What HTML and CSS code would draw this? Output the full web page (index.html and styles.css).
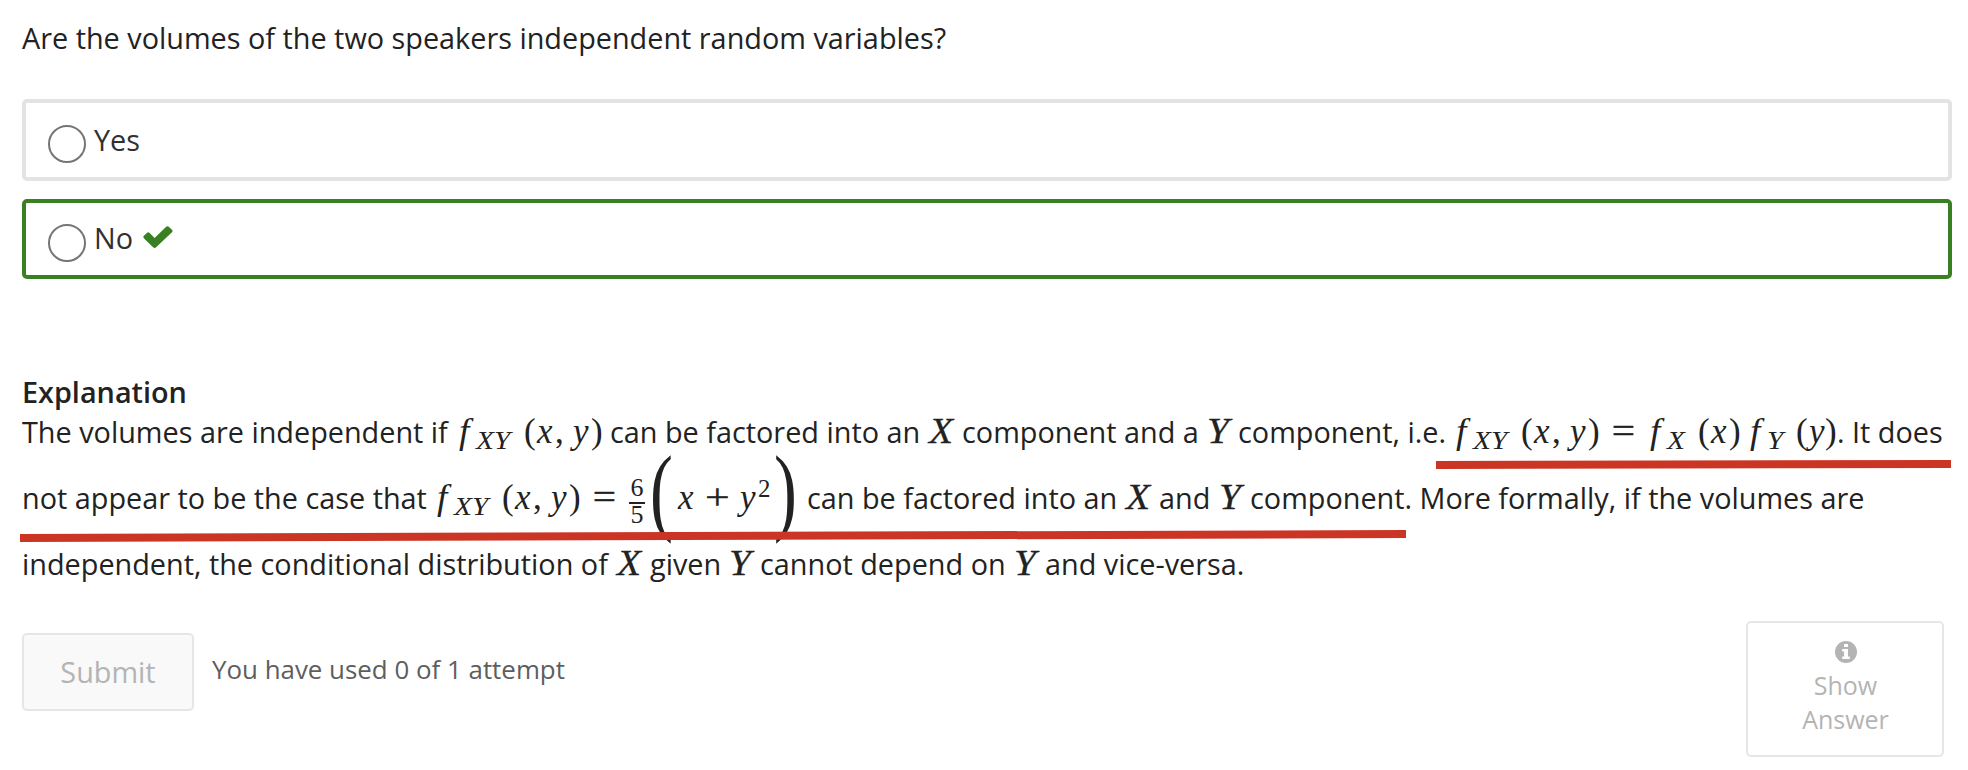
FILE: index.html
```html
<!DOCTYPE html>
<html lang="en">
<head>
<meta charset="utf-8">
<title>Problem</title>
<link rel="stylesheet" href="styles.css">
</head>
<body>
<main class="problem">
  <p class="question">Are the volumes of the two speakers independent random variables?</p>
  <div class="options">
    <label class="option"><span class="radio"></span><span class="label">Yes</span></label>
    <label class="option correct"><span class="radio"></span><span class="label">No</span><svg class="check" viewBox="0 0 30 22"><path d="M1.1 9.4 4.2 6.7Q5.4 5.8 6.7 6.9L11.6 11.9 22.9 1.1Q24.5-.5 26 .9L29 3.7Q30.2 5 29 6.2L13.1 21.3Q11.6 22.7 10.1 21.3L1.1 12.4Q-.5 10.8 1.1 9.4Z"/></svg></label>
  </div>
  <section class="explanation">
    <h2 class="heading">Explanation</h2>
    <div class="line first">
      <span class="seg s1">The volumes are independent if</span><span class="math"><i class="f">f</i><i class="sub">XY</i><b class="p">(</b><i class="v">x</i><b class="c">,</b><i class="v">y</i><b class="q">)</b></span><span class="seg s2">can be factored into an</span><i class="cap">X</i><span class="seg s3">component and a</span><i class="cap cy">Y</i><span class="seg s4">component, i.e.</span><span class="math"><i class="f">f</i><i class="sub">XY</i><b class="p">(</b><i class="v">x</i><b class="c">,</b><i class="v">y</i><b class="q">)</b><b class="eq wide">=</b><i class="f">f</i><i class="sub one">X</i><b class="p">(</b><i class="v">x</i><b class="q">)</b><i class="f">f</i><i class="sub one sy">Y</i><b class="p">(</b><i class="v">y</i><b class="q last">)</b></span><span class="seg s5">. It does</span>
    </div>
    <div class="line">
      <span class="seg t1">not appear to be the case that</span><span class="math"><i class="f">f</i><i class="sub">XY</i><b class="p">(</b><i class="v">x</i><b class="c">,</b><i class="v">y</i><b class="q">)</b><b class="eq">=</b></span><span class="frac"><span>6</span><span>5</span></span><span class="big"><b>(</b></span><span class="math"><i class="x2">x</i><b class="plus">+</b><i class="v">y</i><b class="sup">2</b></span><span class="big close"><b>)</b></span><span class="seg t2">can be factored into an</span><i class="cap">X</i><span class="seg t3">and</span><i class="cap cy">Y</i><span class="seg t4">component. More formally, if the volumes are</span>
    </div>
    <div class="line">
      <span class="seg u1">independent, the conditional distribution of</span><i class="cap">X</i><span class="seg u2">given</span><i class="cap cy">Y</i><span class="seg u3">cannot depend on</span><i class="cap cy">Y</i><span class="seg u4">and vice-versa.</span>
    </div>
    <svg class="marks" viewBox="0 0 1968 770"><path d="M1436 461 1951 460V468L1436 469ZM20 534 1406 530V538L20 542Z"/></svg>
  </section>
  <footer class="actions">
    <button class="submit" disabled>Submit</button>
    <span class="attempts">You have used 0 of 1 attempt</span>
    <button class="show" disabled><svg class="info" viewBox="0 0 22 22"><circle cx="11" cy="11" r="11"/><path d="M9 3h4v3H9zM7.2 8H13v7.5h1.8V18H7.2v-2.5H9v-5H7.2z"/></svg><span>Show<br>Answer</span></button>
  </footer>
</main>
</body>
</html>
```
FILE: styles.css
```css
* { box-sizing: border-box; }
body { margin: 0; background: #fff; color: #222; font-family: "Open Sans", sans-serif; font-size: 28.82px; }
.problem { padding: 18px 16px 0 22px; position: relative; height: 770px; overflow: hidden; }
.question { margin: 0 0 41px; line-height: 40px; white-space: nowrap; }
.options { display: flex; flex-direction: column; gap: 18px; }
.option { display: flex; align-items: flex-start; width: 1930px; height: 82px; border: 4px solid #e3e3e3; border-radius: 5px; padding: 22px 22px 0; color: #313131; }
.option.correct { height: 80px; border-color: #398022; padding-top: 21px; }
.radio { width: 38px; height: 38px; border: 2px solid #757575; border-radius: 50%; }
.label { line-height: 40px; margin: -5px 0 0 8px; }
.correct .label { margin-top: -6px; }
.check { width: 30px; height: 22px; margin: 2px 0 0 10px; fill: #398022; }
.explanation { margin-top: 93px; }
.heading { margin: 0; font-size: 28.8px; font-weight: 600; line-height: 40px; }
.line { display: flex; height: 66px; line-height: 66px; white-space: nowrap; align-items: baseline; }
.line.first { height: 53px; line-height: 40px; }
.seg { flex: none; }
.s1 { width: 435px; } .s2 { width: 319px; } .s3 { width: 245px; } .s4 { width: 216px; }
.t1 { width: 413px; } .t2 { width: 319px; } .t3 { width: 60px; }
.u1 { width: 595px; } .u2 { width: 79px; } .u3 { width: 254px; }
.math, .cap, .frac { flex: none; font-family: "Liberation Serif", serif; font-size: 35px; }
.math { display: flex; align-items: baseline; }
.math > *, .frac span { font-weight: normal; flex: none; line-height: 1; }
.f { width: 20px; padding-left: 2px; transform: scaleX(1.06); transform-origin: left; }
.sub { width: 48px; margin-left: -1px; font-size: 25.5px; position: relative; top: 6px; transform: scaleX(1.15); transform-origin: left; }
.sub.one { width: 31px; }
.sub.sy { width: 29px; }
.p { width: 13px; } .v { width: 18px; } .c { width: 18px; } .q { width: 19px; }
.q.last { width: 12px; margin-left: -2px; }
.eq { width: 38px; padding-left: 4px; transform: scaleX(1.18); transform-origin: left; -webkit-text-stroke: .4px #222; }
.eq.wide { width: 41px; }
.cap { width: 33px; font-size: 36.5px; line-height: 1; transform: scaleX(1.08); transform-origin: left; -webkit-text-stroke: .3px #222; }
.cap.cy { width: 31px; }
.frac { width: 16px; display: flex; flex-direction: column; align-self: flex-start; font-size: 26px; margin: 12px 0 0 3px; text-align: center; }
.frac span { height: 25px; line-height: 21px; }
.frac span + span { border-top: 2px solid #222; height: 27px; }
.big { width: 33px; height: 66px; flex: none; align-self: flex-start; }
.big b { display: block; font: normal 98px/66px "Liberation Serif", serif; transform: translate(0, -8px) scaleX(.7); }
.big.close b { transform: translate(-5px, -8px) scaleX(.7); }
.x2 { width: 27px; }
.plus { width: 35px; transform: scaleX(1.25); transform-origin: left; -webkit-text-stroke: .3px #222; }
.sup { font-size: 25px; width: 16px; position: relative; top: -12px; }
.marks { position: absolute; left: 0; top: 0; width: 1968px; height: 770px; fill: #cb3524; }
.actions { display: flex; align-items: flex-start; padding-top: 24px; height: 160px; }
.submit, .show { font: 28.8px/40px "Open Sans", sans-serif; color: #b4b4b4; border: 2px solid #e6e6e6; border-radius: 5px; padding: 0; }
.submit { width: 172px; height: 78px; margin-top: 12px; background: #f9f9f9; }
.attempts { font-size: 25.9px; line-height: 40px; margin: 28px 0 0 18px; color: #5e5e5e; }
.show { display: flex; flex-direction: column; align-items: center; width: 198px; height: 136px; margin: 0 8px 0 auto; background: #fff; padding: 18px 0 0 1px; font-size: 25px; line-height: 34px; }
.info { width: 22px; height: 22px; margin-bottom: 5px; fill: #b4b4b4; }
.info path { fill: #fff; }
```
